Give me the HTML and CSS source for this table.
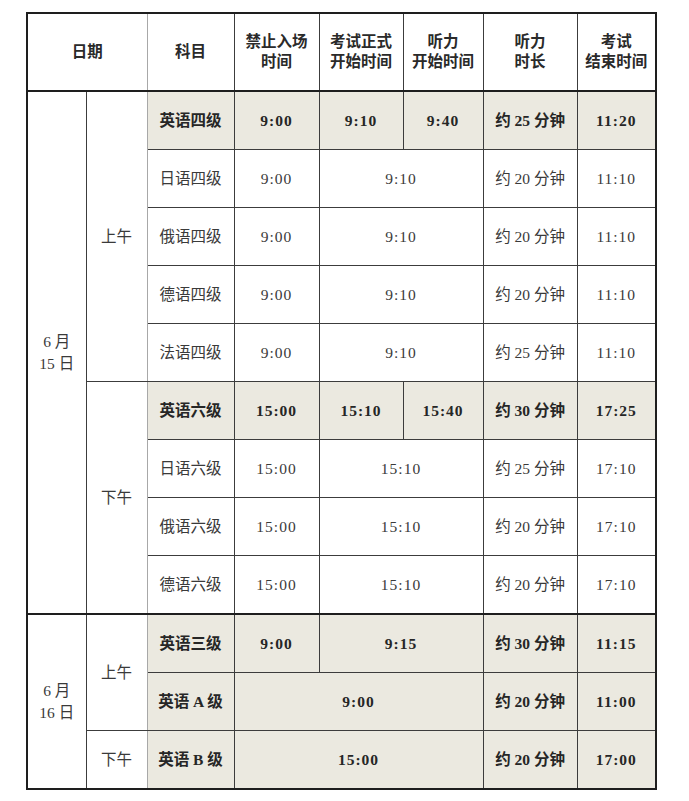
FILE: index.html
```html
<!DOCTYPE html>
<html lang="zh">
<head>
<meta charset="utf-8">
<title>考试时间安排</title>
<link rel="stylesheet" href="styles.css">
</head>
<body>
<div class="page">
<table class="sched">
<colgroup>
<col class="c1"><col class="c2"><col class="c3"><col class="c4"><col class="c5"><col class="c6"><col class="c7"><col class="c8">
</colgroup>
<thead>
<tr>
<th colspan="2" class="gl">日期</th>
<th>科目</th>
<th>禁止入场<br>时间</th>
<th>考试正式<br>开始时间</th>
<th>听力<br>开始时间</th>
<th>听力<br>时长</th>
<th>考试<br>结束时间</th>
</tr>
</thead>
<tbody>
<tr class="hl">
<td rowspan="9" class="date">6 月<br>15 日</td>
<td rowspan="5" class="period gl">上午</td>
<td>英语四级</td><td class="t">9:00</td><td class="t">9:10</td><td class="t">9:40</td><td>约 25 分钟</td><td class="t">11:20</td>
</tr>
<tr>
<td>日语四级</td><td class="t">9:00</td><td colspan="2" class="t">9:10</td><td>约 20 分钟</td><td class="t">11:10</td>
</tr>
<tr>
<td>俄语四级</td><td class="t">9:00</td><td colspan="2" class="t">9:10</td><td>约 20 分钟</td><td class="t">11:10</td>
</tr>
<tr>
<td>德语四级</td><td class="t">9:00</td><td colspan="2" class="t">9:10</td><td>约 20 分钟</td><td class="t">11:10</td>
</tr>
<tr>
<td>法语四级</td><td class="t">9:00</td><td colspan="2" class="t">9:10</td><td>约 25 分钟</td><td class="t">11:10</td>
</tr>
<tr class="hl">
<td rowspan="4" class="period gl">下午</td>
<td>英语六级</td><td class="t">15:00</td><td class="t">15:10</td><td class="t">15:40</td><td>约 30 分钟</td><td class="t">17:25</td>
</tr>
<tr>
<td>日语六级</td><td class="t">15:00</td><td colspan="2" class="t">15:10</td><td>约 25 分钟</td><td class="t">17:10</td>
</tr>
<tr>
<td>俄语六级</td><td class="t">15:00</td><td colspan="2" class="t">15:10</td><td>约 20 分钟</td><td class="t">17:10</td>
</tr>
<tr>
<td>德语六级</td><td class="t">15:00</td><td colspan="2" class="t">15:10</td><td>约 20 分钟</td><td class="t">17:10</td>
</tr>
<tr class="hl sep">
<td rowspan="3" class="date">6 月<br>16 日</td>
<td rowspan="2" class="period gl">上午</td>
<td>英语三级</td><td class="t">9:00</td><td colspan="2" class="t">9:15</td><td>约 30 分钟</td><td class="t">11:15</td>
</tr>
<tr class="hl">
<td>英语 A 级</td><td colspan="3" class="t">9:00</td><td>约 20 分钟</td><td class="t">11:00</td>
</tr>
<tr class="hl">
<td class="period gl">下午</td>
<td>英语 B 级</td><td colspan="3" class="t">15:00</td><td>约 20 分钟</td><td class="t">17:00</td>
</tr>
</tbody>
</table>
</div>
</body>
</html>
```

FILE: styles.css
```css
html, body {
  margin: 0;
  padding: 0;
  background: #ffffff;
}

.page {
  padding: 12px 0 0 26px;
}

.sched {
  border-collapse: collapse;
  table-layout: fixed;
  width: 630px;
  border: 2px solid #1e1e1e;
  font-family: "Liberation Serif", "Noto Sans CJK SC", serif;
  font-size: 15.5px;
  color: #3a3a3a;
}

.c1 { width: 59px; }
.c2 { width: 61px; }
.c3 { width: 87px; }
.c4 { width: 85px; }
.c5 { width: 84px; }
.c6 { width: 80px; }
.c7 { width: 94px; }
.c8 { width: 79px; }

.sched th,
.sched td {
  border: 1px solid #3c3c3c;
  text-align: center;
  vertical-align: middle;
  padding: 0;
  line-height: 20px;
}

.sched th {
  height: 76px;
  font-weight: 700;
  color: #2a2a2a;
  border-bottom: 2px solid #1e1e1e;
}

.sched td {
  height: 57px;
}

.sched td.date {
  line-height: 22px;
  background: #ffffff;
  font-weight: 400;
  color: #3a3a3a;
}

.sched td.period {
  background: #ffffff;
  font-weight: 400;
  color: #3a3a3a;
}

.sched .gl {
  border-right-color: #a8a8a8;
}

.t {
  letter-spacing: 1px;
}

.hl td {
  background: #ebe9e0;
  font-weight: 700;
  color: #262626;
}

.sep td {
  border-top: 2px solid #1e1e1e;
}
```
